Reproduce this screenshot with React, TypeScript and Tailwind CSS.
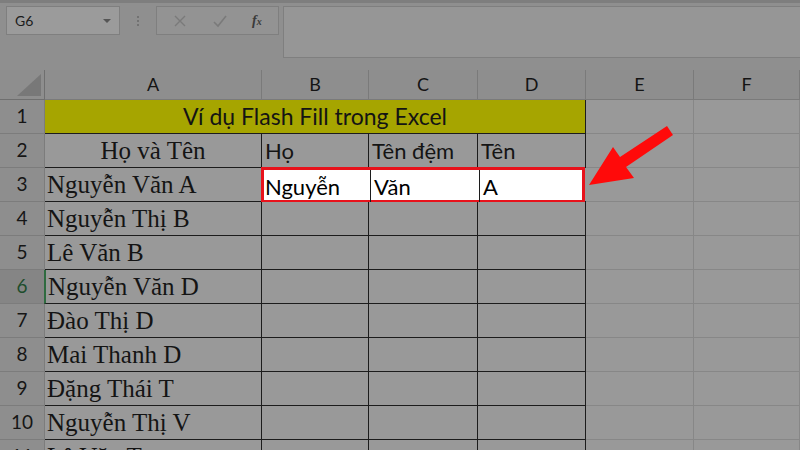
import React from 'react';

const COLS = ['A', 'B', 'C', 'D', 'E', 'F'];
const NAMES = [
  'Nguyễn Thị B',
  'Lê Văn B',
  'Nguyễn Văn D',
  'Đào Thị D',
  'Mai Thanh D',
  'Đặng Thái T',
  'Nguyễn Thị V',
  'Lê Văn T',
];

const serif = { fontFamily: '"Liberation Serif", "Times New Roman", serif' };
const sans = { fontFamily: 'Lato, "Open Sans", sans-serif' };

function RowHead({ n, active }: { n: number; active?: boolean }) {
  return (
    <div
      className={
        'h-[34px] flex items-center justify-center border-r border-b border-[#7c7c7c] text-[19px] ' +
        (active ? 'bg-[#858585] text-[#1d4d2c]' : 'bg-[#8e8e8e] text-[#161616]')
      }
      style={sans}
    >
      {n}
    </div>
  );
}

function Blank({ dark }: { dark?: boolean }) {
  return (
    <div
      className={
        'h-[34px] bg-[#999999] border-b ' +
        (dark ? 'border-r border-[#1c1c1c]' : 'border-r border-[#878787]')
      }
    />
  );
}

export default function App() {
  return (
    <div className="w-[800px] h-[450px] overflow-hidden bg-[#8f8f8f] relative">
      {/* thanh công thức */}
      <div className="h-[70px] flex items-start pt-[6px] pl-[6px] border-t-[3px] border-[#7e7e7e]">
        <div
          className="w-[114px] h-[29px] mt-[-3px] bg-[#9b9b9b] border border-[#7f7f7f] flex items-center justify-between px-2 text-[14px] text-[#1b1b1b]"
          style={sans}
        >
          <span>G6</span>
          <span className="w-0 h-0 border-l-[4px] border-r-[4px] border-t-[4px] border-l-transparent border-r-transparent border-t-[#555]" />
        </div>
        <div className="w-[36px] h-[29px] mt-[-3px] flex flex-col items-center justify-center gap-[2px]">
          <span className="w-[2px] h-[2px] bg-[#727272]" />
          <span className="w-[2px] h-[2px] bg-[#727272]" />
          <span className="w-[2px] h-[2px] bg-[#727272]" />
        </div>
        <div className="w-[123px] h-[29px] mt-[-3px] bg-[#939393] border border-[#7f7f7f] flex items-center justify-around px-1">
          <svg width="14" height="14" viewBox="0 0 14 14" fill="none" stroke="#7a7a7a" strokeWidth="1.4">
            <path d="M2 2 L12 12 M12 2 L2 12" />
          </svg>
          <svg width="16" height="14" viewBox="0 0 16 14" fill="none" stroke="#7a7a7a" strokeWidth="1.6">
            <path d="M2 8 L6 12 L14 2" />
          </svg>
          <span className="italic text-[14px] text-[#3a3a3a] font-bold" style={serif}>
            f<span className="text-[10px]">x</span>
          </span>
        </div>
        <div className="flex-1 h-[52px] mt-[-3px] ml-[4px] bg-[#969696] border border-[#7f7f7f] border-r-0" />
      </div>

      {/* lưới ô */}
      <div className="grid grid-cols-[45px_217px_107px_109px_108px_108px_106px]">
        {/* tiêu đề cột */}
        <div className="h-[30px] bg-[#8e8e8e] border-r border-b border-[#6f6f6f] flex items-end justify-end p-[3px]">
          <svg width="24" height="22" viewBox="0 0 24 22">
            <path d="M24 0 L24 22 L0 22 Z" fill="#787878" />
          </svg>
        </div>
        {COLS.map((c) => (
          <div
            key={c}
            className="h-[30px] bg-[#8e8e8e] border-r border-b border-[#7a7a7a] flex items-center justify-center text-[18px] text-[#141414]"
            style={sans}
          >
            {c}
          </div>
        ))}

        {/* hàng 1 */}
        <RowHead n={1} />
        <div
          className="col-span-4 h-[34px] bg-[#a6a500] border-r border-b border-[#1c1c1c] flex items-center justify-center text-[23px] text-[#141414]"
          style={sans}
        >
          Ví dụ Flash Fill trong Excel
        </div>
        <Blank />
        <Blank />

        {/* hàng 2 */}
        <RowHead n={2} />
        <div
          className="h-[34px] bg-[#999999] border-r border-b border-[#1c1c1c] flex items-center justify-center text-[25px] text-[#141414]"
          style={serif}
        >
          Họ và Tên
        </div>
        {['Họ', 'Tên đệm', 'Tên'].map((t) => (
          <div
            key={t}
            className="h-[34px] bg-[#999999] border-r border-b border-[#1c1c1c] flex items-center pl-[3px] text-[22px] text-[#141414]"
            style={sans}
          >
            {t}
          </div>
        ))}
        <Blank />
        <Blank />

        {/* hàng 3 */}
        <RowHead n={3} />
        <div
          className="h-[34px] bg-[#999999] border-r border-b border-[#1c1c1c] flex items-center pl-[2px] text-[25px] text-[#141414]"
          style={serif}
        >
          Nguyễn Văn A
        </div>
        <div className="col-span-3 h-[34px] bg-[#999999] border-b border-[#1c1c1c] pr-px">
          <div
            className="grid grid-cols-[107px_109px_1fr] bg-white border-[3px] border-[#e8121b] ml-[-1px] mt-[-1px] h-[36px] text-[22px] text-black"
            style={sans}
          >
            <div className="flex items-center pl-[1px] border-r border-[#1c1c1c]">Nguyễn</div>
            <div className="flex items-center pl-[3px] border-r border-[#1c1c1c]">Văn</div>
            <div className="flex items-center pl-[3px]">A</div>
          </div>
        </div>
        <Blank />
        <Blank />

        {NAMES.map((name, i) => {
          const n = i + 4;
          return (
            <React.Fragment key={n}>
              <RowHead n={n} active={n === 6} />
              <div
                className={
                  'h-[34px] bg-[#999999] border-r border-b border-[#1c1c1c] flex items-center pl-[2px] text-[25px] text-[#141414] ' +
                  (n === 6 ? 'border-l-2 border-l-[#2f6b40] ml-[-1px]' : '')
                }
                style={serif}
              >
                {name}
              </div>
              <Blank dark />
              <Blank dark />
              <Blank dark />
              <Blank />
              <Blank />
            </React.Fragment>
          );
        })}
      </div>

      {/* mũi tên đỏ */}
      <svg className="absolute left-0 top-0 pointer-events-none" width="800" height="450" viewBox="0 0 800 450">
        <path
          d="M589 185 L613 147 L620 157 L667 126 L673 135 L626 167 L634 178 Z"
          fill="#ff0a0a"
        />
      </svg>
    </div>
  );
}
